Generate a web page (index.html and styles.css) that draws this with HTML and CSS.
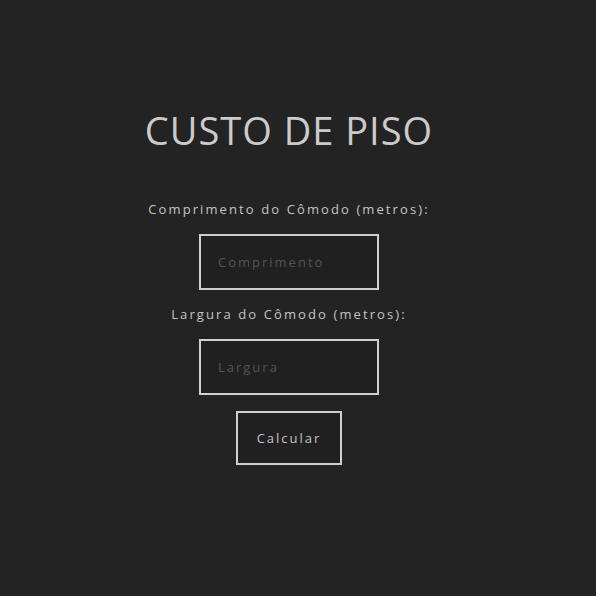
FILE: index.html
```html
<!DOCTYPE html>
<html lang="pt-BR">
<head>
<meta charset="utf-8">
<title>Custo de Piso</title>
<link rel="stylesheet" href="styles.css">
</head>
<body>
<main class="app">
  <h1 class="title">CUSTO DE PISO</h1>
  <form class="form">
    <label class="label" for="comp">Comprimento do Cômodo (metros):</label>
    <input class="field" id="comp" type="text" placeholder="Comprimento">
    <label class="label" for="larg">Largura do Cômodo (metros):</label>
    <input class="field" id="larg" type="text" placeholder="Largura">
    <button class="btn" type="button">Calcular</button>
  </form>
</main>
</body>
</html>
```
FILE: styles.css
```css
html, body {
  margin: 0;
  padding: 0;
  background: #232323;
  height: 100%;
}
body {
  font-family: "Open Sans", "Noto Sans", sans-serif;
  color: #c8c8c8;
}
.app {
  width: 578px;
  display: flex;
  flex-direction: column;
  align-items: center;
  padding-top: 104px;
}
.title {
  margin: 0;
  font-size: 38px;
  line-height: 52px;
  font-weight: 400;
  letter-spacing: 1px;
  color: #cbcbcb;
}
.form {
  margin-top: 45px;
  display: flex;
  flex-direction: column;
  align-items: center;
  gap: 16px;
}
.label {
  font-size: 13px;
  line-height: 17px;
  letter-spacing: 2.1px;
  color: #c4c4c4;
}
.field {
  box-sizing: border-box;
  width: 180px;
  height: 56px;
  border: 2px solid #cfcfcf;
  background: #202020;
  padding: 0 17px;
  font-family: inherit;
  font-size: 13px;
  letter-spacing: 2px;
  color: #ccc;
  outline: none;
}
.field::placeholder {
  color: #555;
}
.btn {
  box-sizing: border-box;
  width: 106px;
  height: 54px;
  border: 2px solid #cfcfcf;
  background: #202020;
  font-family: inherit;
  font-size: 13px;
  letter-spacing: 2px;
  color: #c4c4c4;
  padding: 0;
}
```
